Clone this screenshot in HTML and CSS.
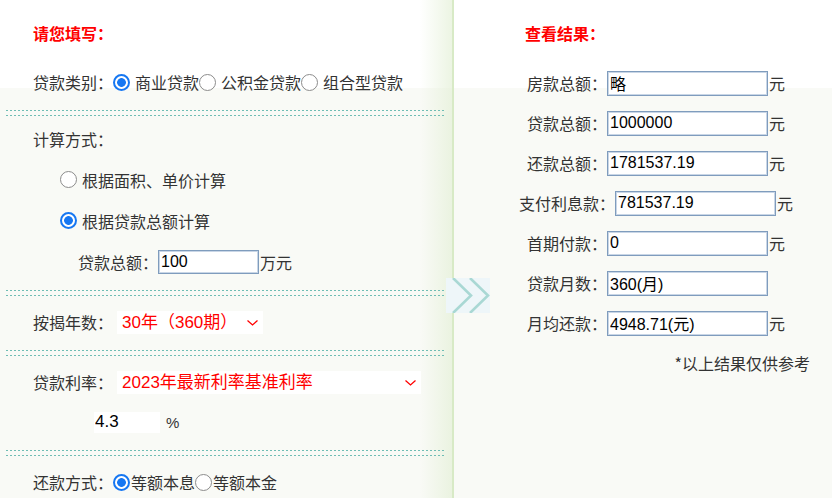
FILE: index.html
```html
<!DOCTYPE html>
<html lang="zh-CN">
<head>
  <meta charset="UTF-8">
  <meta name="viewport" content="width=device-width, initial-scale=1.0">
  <title>房贷计算器</title>
  <link rel="stylesheet" href="styles.css">
</head>
<body>
  <div class="calc">
    <div class="fill">
      <h3 class="title">请您填写：</h3>
      <div class="row row-type">
        贷款类别：<input type="radio" name="type" checked><span>商业贷款</span><input type="radio" name="type"><span>公积金贷款</span><input type="radio" name="type"><span>组合型贷款</span>
      </div>
      <div class="sep"></div>

      <div class="group g-way">
        <div class="row">计算方式：</div>
        <div class="row sub"><input type="radio" name="way"><span>根据面积、单价计算</span></div>
        <div class="row sub"><input type="radio" name="way" checked><span>根据贷款总额计算</span></div>
        <div class="row sub2">贷款总额：<input class="box box-sum" type="text" value="100"><span class="unit">万元</span></div>
      </div>
      <div class="sep"></div>

      <div class="group">
        <div class="row">
          按揭年数：
          <div class="pick pick-year">
            <select>
              <option>30年（360期）</option>
              <option>20年（240期）</option>
              <option>10年（120期）</option>
            </select>
            <svg class="arrow" viewBox="0 0 11 6" width="11" height="6"><polyline points="0.5,0.5 5.5,5 10.5,0.5" fill="none" stroke="#f00" stroke-width="1.3"/></svg>
          </div>
        </div>
      </div>
      <div class="sep"></div>

      <div class="group">
        <div class="row">
          贷款利率：
          <div class="pick pick-rate">
            <select>
              <option>2023年最新利率基准利率</option>
            </select>
            <svg class="arrow" viewBox="0 0 11 6" width="11" height="6"><polyline points="0.5,0.5 5.5,5 10.5,0.5" fill="none" stroke="#f00" stroke-width="1.3"/></svg>
          </div>
        </div>
        <div class="row"><input class="rate" type="text" value="4.3"><span class="pct">%</span></div>
      </div>
      <div class="sep"></div>

      <div class="group">
        <div class="row row-repay">
          还款方式：<input type="radio" name="repay" checked><span>等额本息</span><input type="radio" name="repay"><span>等额本金</span>
        </div>
      </div>
    </div>

    <div class="result">
      <h3 class="title">查看结果：</h3>
      <div class="res-list">
        <div class="res-row"><span>房款总额：</span><input class="box res" type="text" value="略" readonly><span class="unit">元</span></div>
        <div class="res-row"><span>贷款总额：</span><input class="box res" type="text" value="1000000" readonly><span class="unit">元</span></div>
        <div class="res-row"><span>还款总额：</span><input class="box res" type="text" value="1781537.19" readonly><span class="unit">元</span></div>
        <div class="res-row"><span>支付利息款：</span><input class="box res" type="text" value="781537.19" readonly><span class="unit">元</span></div>
        <div class="res-row"><span>首期付款：</span><input class="box res" type="text" value="0" readonly><span class="unit">元</span></div>
        <div class="res-row"><span>贷款月数：</span><input class="box res" type="text" value="360(月)" readonly><span class="unit blank">元</span></div>
        <div class="res-row"><span>月均还款：</span><input class="box res" type="text" value="4948.71(元)" readonly><span class="unit">元</span></div>
        <div class="note">*以上结果仅供参考</div>
      </div>
    </div>

    <div class="go">
      <svg viewBox="0 0 44 35" width="44" height="35">
        <polyline points="7,0 25,17.5 7,35" fill="none" stroke="#a9d8d4" stroke-width="2.6"/>
        <polyline points="24,0 42,17.5 24,35" fill="none" stroke="#a9d8d4" stroke-width="2.6"/>
      </svg>
    </div>
  </div>
</body>
</html>
```

FILE: styles.css
```css
body {
  margin: 0;
  font-family: "Noto Sans CJK SC", "Liberation Sans", sans-serif;
  font-size: 16px;
  color: #333;
  background: linear-gradient(#fff 88px, #f9faf6 88px);
  overflow: hidden;
}
.calc {
  display: flex;
  position: relative;
  height: 498px;
}
.fill {
  width: 454px;
  box-sizing: border-box;
  padding-left: 33px;
  border-right: 2px solid #d8eac6;
  background: linear-gradient(to right, rgba(255,255,255,0) 420px, rgba(228,240,215,0.7) 452px);
}
.title {
  margin: 13px 0 0;
  height: 40px;
  display: flex;
  align-items: center;
  font-size: 16px;
  font-weight: bold;
  color: #f00;
}
.row {
  height: 40px;
  display: flex;
  align-items: center;
  white-space: nowrap;
}
.row-type {
  margin-top: 9px;
}
input[type="radio"] {
  appearance: none;
  -webkit-appearance: none;
  box-sizing: border-box;
  width: 17px;
  height: 17px;
  margin: 0 5px 0 0;
  border: 1px solid #8c8c8c;
  border-radius: 50%;
  background: #fff;
}
input[type="radio"]:checked {
  border: 2px solid #1677f2;
  background: radial-gradient(circle, #1677f2 4px, #fff 4.7px);
}
.row-repay input[type="radio"] {
  margin-right: 1px;
}
.sep {
  height: 7px;
  width: 440px;
  margin: 8px 0 0 -27px;
  background:
    linear-gradient(to right, #6fbdb4 2px, transparent 2px) 0 0 / 4px 1px repeat-x,
    linear-gradient(to right, #6fbdb4 2px, transparent 2px) 0 5px / 4px 1px repeat-x;
}
.group {
  padding-top: 5px;
}
.g-way {
  padding-top: 1px;
}
.g-way .row {
  height: 41px;
}
.sub {
  padding-left: 27px;
}
.sub2 {
  padding-left: 45px;
}
.box {
  box-sizing: border-box;
  height: 25px;
  padding: 0 2px;
  margin: 0;
  border: 1px solid #7f9cbd;
  box-shadow: inset 0 0 0 1px #c9d6e6;
  background: #fff;
  color: #000;
  font-family: "Liberation Sans", "Noto Sans CJK SC", sans-serif;
  font-size: 16px;
  outline: none;
}
.box-sum {
  width: 101px;
  height: 24px;
}
.unit {
  margin-left: 1px;
}
.blank {
  visibility: hidden;
}
.pick {
  position: relative;
  margin-left: 4px;
}
.pick select {
  appearance: none;
  -webkit-appearance: none;
  display: block;
  height: 23px;
  border: 0;
  border-radius: 0;
  padding: 0 0 0 5px;
  background: #fff;
  color: #f00;
  font-family: "Liberation Sans", "Noto Sans CJK SC", sans-serif;
  font-size: 17px;
}
.pick-year select {
  width: 146px;
}
.pick-rate select {
  width: 304px;
}
.arrow {
  position: absolute;
  right: 5px;
  top: 9px;
}
.rate {
  width: 66px;
  height: 21px;
  box-sizing: border-box;
  margin: 0 0 0 61px;
  padding: 0 1px;
  border: 0;
  background: #fff;
  color: #000;
  font-family: "Liberation Sans", sans-serif;
  font-size: 17px;
}
.pct {
  margin-left: 6px;
  font-family: "Liberation Sans", sans-serif;
  font-size: 15px;
}
.result {
  flex: 1;
  padding-left: 26px;
}
.result .title {
  margin-left: 45px;
}
.res-list {
  margin-top: 10px;
}
.res-row {
  height: 40px;
  display: flex;
  align-items: center;
  justify-content: center;
  white-space: nowrap;
}
.res {
  width: 161px;
}
.note {
  height: 40px;
  display: flex;
  align-items: center;
  justify-content: flex-end;
  padding-right: 22px;
}
.go {
  position: absolute;
  left: 446px;
  top: 278px;
  width: 44px;
  height: 35px;
  background: #eef6f9;
}
.go svg {
  display: block;
}
```
